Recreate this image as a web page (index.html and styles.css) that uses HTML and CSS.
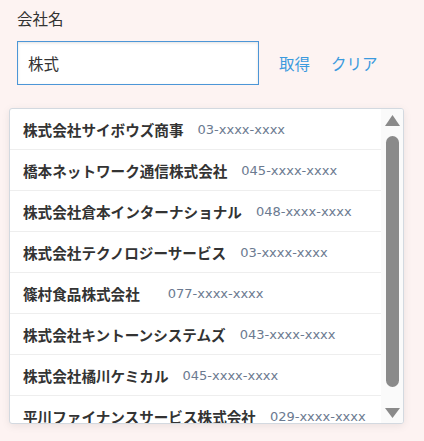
FILE: index.html
```html
<!DOCTYPE html>
<html lang="ja">
<head>
<meta charset="utf-8">
<link rel="stylesheet" href="styles.css">
</head>
<body>
<div class="field">
  <div class="label">会社名</div>
  <div class="input-row">
    <div class="input">株式</div>
    <a class="action">取得</a>
    <a class="action">クリア</a>
  </div>
  <div class="dropdown">
    <ul class="list">
      <li class="item"><span class="name">株式会社サイボウズ商事</span><span class="tel">03-xxxx-xxxx</span></li>
      <li class="item"><span class="name">橋本ネットワーク通信株式会社</span><span class="tel">045-xxxx-xxxx</span></li>
      <li class="item"><span class="name">株式会社倉本インターナショナル</span><span class="tel">048-xxxx-xxxx</span></li>
      <li class="item"><span class="name">株式会社テクノロジーサービス</span><span class="tel">03-xxxx-xxxx</span></li>
      <li class="item"><span class="name">篠村食品株式会社</span><span class="tel wide">077-xxxx-xxxx</span></li>
      <li class="item"><span class="name">株式会社キントーンシステムズ</span><span class="tel">043-xxxx-xxxx</span></li>
      <li class="item"><span class="name">株式会社橘川ケミカル</span><span class="tel">045-xxxx-xxxx</span></li>
      <li class="item"><span class="name">平川ファイナンスサービス株式会社</span><span class="tel">029-xxxx-xxxx</span></li>
    </ul>
    <div class="scrollbar">
      <svg class="arrow up" width="15" height="11" viewBox="0 0 15 11"><path d="M7.5 0 L15 11 L0 11 Z" fill="#8a8a8a"/></svg>
      <div class="thumb"></div>
      <svg class="arrow down" width="15" height="10" viewBox="0 0 15 10"><path d="M0 0 L15 0 L7.5 10 Z" fill="#8a8a8a"/></svg>
    </div>
  </div>
</div>
</body>
</html>
```
FILE: styles.css
```css
html, body {
  margin: 0;
  padding: 0;
}
body {
  background: #fdf3f2;
  font-family: "Noto Sans CJK JP", "Noto Sans", sans-serif;
  color: #333;
  width: 424px;
  height: 441px;
  overflow: hidden;
}
.field {
  padding: 9px 0 0 17px;
}
.label {
  font-size: 15.5px;
  line-height: 18px;
  color: #333;
}
.input-row {
  display: flex;
  align-items: center;
  margin-top: 14px;
}
.input {
  box-sizing: border-box;
  width: 242px;
  height: 44px;
  border: 1px solid #4c96d7;
  background: #fff;
  box-shadow: inset 0 1px 3px rgba(0,0,0,0.12);
  font-size: 15.5px;
  line-height: 42px;
  padding-left: 10px;
  color: #333;
}
.action {
  font-size: 15.5px;
  color: #3b9ade;
  margin-left: 20px;
}
.action + .action {
  margin-left: 21px;
}
.dropdown {
  box-sizing: border-box;
  margin-top: 23px;
  margin-left: -8px;
  width: 395px;
  height: 316px;
  border: 1px solid #d3d9e0;
  border-radius: 3px;
  background: #fff;
  box-shadow: 0 2px 8px rgba(0,0,0,0.08);
  display: flex;
  overflow: hidden;
}
.list {
  list-style: none;
  margin: 0;
  padding: 0;
  width: 371px;
  flex: none;
}
.item {
  box-sizing: border-box;
  height: 41px;
  border-bottom: 1px solid #eeeeee;
  display: flex;
  align-items: center;
  padding-left: 13px;
  white-space: nowrap;
}
.name {
  font-weight: bold;
  font-size: 14.6px;
  color: #333;
}
.tel {
  font-family: "DejaVu Sans", "Noto Sans", sans-serif;
  font-size: 13px;
  color: #6b7a90;
  margin-left: 14px;
}
.tel.wide {
  margin-left: 28px;
}
.scrollbar {
  flex: 1;
  background: #fafafa;
  display: flex;
  flex-direction: column;
  align-items: center;
  padding-top: 6px;
}
.arrow {
  display: block;
}
.thumb {
  width: 13px;
  height: 251px;
  margin-top: 10px;
  border-radius: 7px;
  background: #8a8a8a;
}
.arrow.down {
  margin-top: 21px;
}
```
